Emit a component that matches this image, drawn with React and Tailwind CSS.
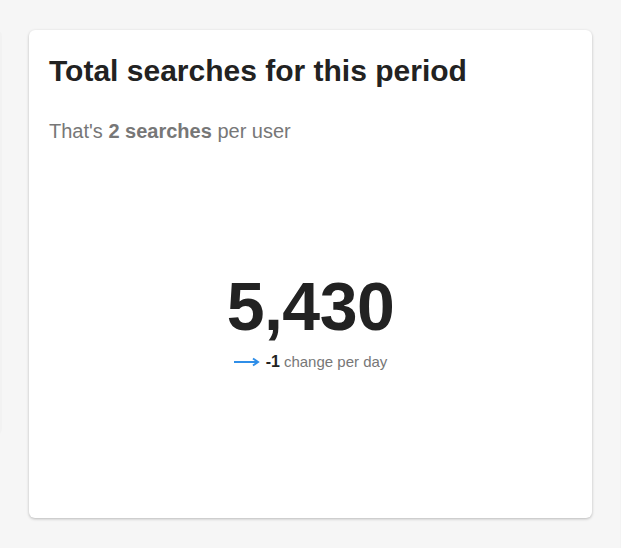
import React from "react";

function ArrowRight() {
  return (
    <svg width="26" height="10" viewBox="0 0 26 10" className="mr-[6px]">
      <path d="M0 5H23" stroke="#2f8ee8" strokeWidth="2" />
      <path d="M19 1.5L24 5L19 8.5" stroke="#2f8ee8" strokeWidth="2" fill="none" />
    </svg>
  );
}

function SearchesCard() {
  return (
    <div className="bg-white rounded-md shadow-[0_1px_3px_rgba(0,0,0,0.25)] w-[563px] h-[488px] px-5 pt-[22px] flex flex-col">
      <h2 className="text-[30px] font-bold text-[#222] leading-[38px]">Total searches for this period</h2>
      <p className="mt-[29px] text-[20px] text-[#777] leading-[24px]">
        That's <span className="font-bold">2 searches</span> per user
      </p>
      <div className="flex flex-col items-center mt-[127px]">
        <div className="text-[68px] font-bold text-[#222] leading-[72px] tracking-[-0.5px]">5,430</div>
        <div className="flex items-center mt-[8px] text-[15px] text-[#777]">
          <ArrowRight />
          <span className="font-bold text-[#222] text-[16px] mr-[4px]">-1</span>
          change per day
        </div>
      </div>
    </div>
  );
}

export default function App() {
  return (
    <div className="w-[621px] h-[548px] bg-[#f6f6f6] relative overflow-hidden" style={{ fontFamily: '"Liberation Sans", Arial, sans-serif' }}>
      <div className="absolute left-[-10px] top-[30px] w-[12px] h-[405px] bg-[#f2f2f2] rounded-md"></div>
      <div className="absolute right-[-10px] top-[30px] w-[11px] h-[520px] bg-[#f3f3f3]"></div>
      <div className="pl-[29px] pt-[30px]">
        <SearchesCard />
      </div>
    </div>
  );
}
